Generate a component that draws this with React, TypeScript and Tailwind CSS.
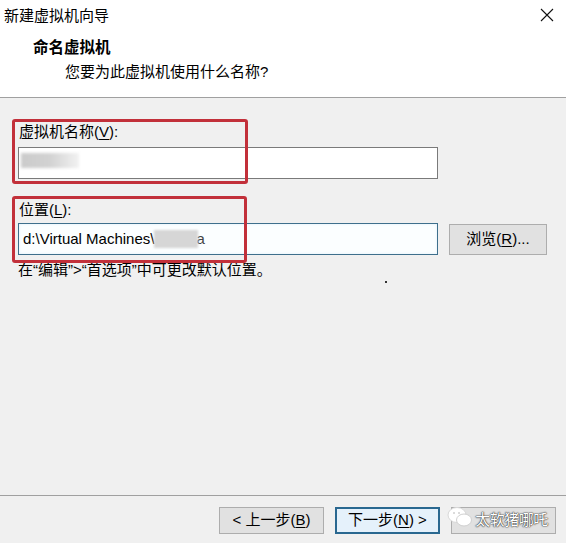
import React from "react";

const F = {
  fontFamily: '"Liberation Sans", "Noto Sans CJK SC", sans-serif',
};

export default function App() {
  return (
    <div
      className="relative w-[566px] h-[543px] bg-[#f0f0f0] flex flex-col text-[15px] text-black overflow-hidden"
      style={F}
    >
      {/* title bar */}
      <div className="h-[30px] bg-white flex items-center justify-between pl-[4px] pr-[12px] shrink-0">
        <span className="text-[15px] leading-none">新建虚拟机向导</span>
        <svg width="14" height="14" viewBox="0 0 14 14">
          <path d="M1 1 L13 13 M13 1 L1 13" stroke="#111" strokeWidth="1.1" />
        </svg>
      </div>
      {/* header */}
      <div className="h-[68px] bg-white border-b border-[#a0a0a0] shrink-0 pl-[33px] pt-[8px]">
        <div className="text-[15.5px] font-bold leading-[20px]">命名虚拟机</div>
        <div className="pl-[32px] mt-[4px] text-[15px] leading-[20px]">您要为此虚拟机使用什么名称?</div>
      </div>
      {/* body */}
      <div className="relative flex-1 pl-[18px] pt-[24px]">
        <div className="text-[15px] leading-[20px] pl-[1px]">
          虚拟机名称(<span className="underline underline-offset-2">V</span>):
        </div>
        <div className="relative mt-[5px] w-[420px] h-[32px] bg-white border border-[#7a7a7a]">
          <div className="absolute left-[2px] top-[5px] w-[58px] h-[15px] bg-gradient-to-r from-[#cbcbcb] via-[#d2d2d2] to-[#f2f2f2] blur-[1.5px]" />
        </div>
        <div className="mt-[21px] text-[15px] leading-[20px] pl-[1px]">
          位置(<span className="underline underline-offset-2">L</span>):
        </div>
        <div className="flex items-center mt-[3px]">
          <div className="relative w-[420px] h-[32px] bg-[#fbfeff] border border-[#3e6f8c] flex items-center pl-[4px] text-[15px] shadow-[inset_0_0_3px_#dff0fa]">
            <span>d:\Virtual Machines\</span>
            <span className="inline-block w-[44px] h-[18px] bg-[#d6d6d6] blur-[1px]" />
            <span className="-ml-[2px] text-[#444]">a</span>
          </div>
          <div className="ml-[11px] w-[98px] h-[31px] bg-[#e1e1e1] border border-[#adadad] flex items-center justify-center text-[15px]">
            浏览(<span className="underline underline-offset-2">R</span>)...
          </div>
        </div>
        <div className="mt-[5px] text-[15px] leading-[20px]">在“编辑”&gt;“首选项”中可更改默认位置。</div>
        <div className="absolute left-[385px] top-[183px] w-[2px] h-[2px] bg-[#333]" />
      </div>
      {/* footer */}
      <div className="h-[48px] shrink-0 border-t border-[#a0a0a0] flex items-start justify-end pr-[10px] pt-[11px] gap-[11px]">
        <div className="w-[105px] h-[27px] bg-[#e1e1e1] border border-[#adadad] flex items-center justify-center text-[15px]">
          &lt; 上一步(<span className="underline underline-offset-2">B</span>)
        </div>
        <div className="w-[105px] h-[27px] bg-[#e5f1fb] border-2 border-[#2a6890] flex items-center justify-center text-[15px]">
          下一步(<span className="underline underline-offset-2">N</span>) &gt;
        </div>
        <div className="relative w-[105px] h-[27px] bg-[#e1e1e1] border border-[#adadad] flex items-center justify-center text-[15px]">
          <div className="absolute -left-[6px] -top-[4px] flex items-center">
            <svg width="30" height="26" viewBox="0 0 30 26">
              <ellipse cx="11" cy="11" rx="9" ry="7.5" fill="#fff" stroke="#d8d8d8" strokeWidth="1" />
              <ellipse cx="18" cy="16" rx="7.5" ry="6" fill="#fff" stroke="#d0d0d0" strokeWidth="1" />
              <circle cx="8" cy="9" r="1" fill="#cfcfcf" />
              <circle cx="13" cy="9" r="1" fill="#cfcfcf" />
            </svg>
          </div>
          <span
            className="ml-[16px] text-white tracking-[-0.5px]"
            style={{ textShadow: "0 0 1px #333, 0 0 1px #333, 0 0 2px #555" }}
          >
            太软猪哪吒
          </span>
        </div>
      </div>

      {/* red annotation boxes */}
      <div className="absolute left-[12px] top-[119px] w-[236px] h-[65px] border-[3px] border-[#c2303a] rounded-[3px]" />
      <div className="absolute left-[12px] top-[196px] w-[235px] h-[67px] border-[3px] border-[#c2303a] rounded-[3px]" />
    </div>
  );
}
